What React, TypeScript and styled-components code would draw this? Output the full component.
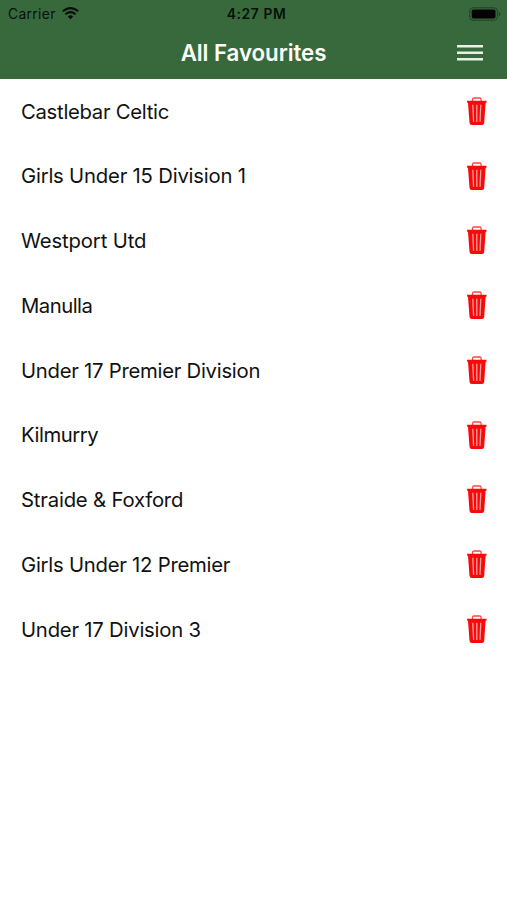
import React from "react";
import styled, { createGlobalStyle } from "styled-components";

const GlobalStyle = createGlobalStyle`
  * { box-sizing: border-box; }
  body { margin: 0; background: #fff; font-family: Inter, "Liberation Sans", sans-serif; }
`;

const Screen = styled.main`
  width: 100%;
  min-height: 900px;
  background: #fff;
`;

const Header = styled.header`
  height: 79px;
  background: #38693d;
`;

const StatusBar = styled.div`
  height: 27px;
  padding: 0 6px 0 8px;
  display: grid;
  grid-template-columns: 1fr auto 1fr;
  align-items: center;
  color: #061008;
`;

const Carrier = styled.div`
  display: flex;
  align-items: center;
  gap: 6px;
  font-size: 13.8px;
  letter-spacing: 0.35px;
`;

const Time = styled.time`
  padding-left: 4px;
  font-size: 13.8px;
  font-weight: 600;
  letter-spacing: 0.6px;
`;

const Battery = styled.svg`
  justify-self: end;
  display: block;
`;

const NavBar = styled.div`
  height: 51px;
  padding: 0 24px;
  display: grid;
  grid-template-columns: 1fr auto 1fr;
  align-items: center;
`;

const Title = styled.h1`
  grid-column: 2;
  margin: 0;
  color: #fbfff8;
  font-size: 22.3px;
  line-height: 28px;
  font-weight: 600;
  letter-spacing: -0.06px;
`;

const MenuButton = styled.button`
  justify-self: end;
  width: 26px;
  height: 18px;
  padding: 0;
  border: 0;
  background: none;
  svg { display: block; }
`;

const List = styled.ul`
  list-style: none;
  margin: 0;
  padding: 0;
`;

const Row = styled.li`
  height: 64.75px;
  padding: 0 20px 0 21px;
  display: flex;
  align-items: center;
  justify-content: space-between;
`;

const Name = styled.span<{ $tracking: number }>`
  padding-top: 0.5px;
  color: #111;
  font-size: 20.3px;
  line-height: 26px;
  letter-spacing: ${(p) => p.$tracking}px;
  white-space: nowrap;
`;

const DeleteButton = styled.button`
  width: 20px;
  height: 29px;
  padding: 0;
  border: 0;
  background: none;
  svg { display: block; }
`;

const MenuIcon = () => (
  <svg width="26" height="18" viewBox="0 0 26 18" stroke="#e9f1e6" strokeWidth="2.4">
    <path d="M0 2.2H26M0 8.7H26M0 15.2H26" />
  </svg>
);

const TrashIcon = () => (
  <svg width="20" height="29" viewBox="0 0 20 29" fill="none">
    <path d="M5.5 4.7V2.4Q5.5 1 6.9 1H12.7Q14.1 1 14.1 2.4V4.7" stroke="#ff4545" strokeWidth="1.3" />
    <path d="M.1 3.8H19.5V5.8H18.6L17.2 25.7Q17 27.9 14.9 27.9H4.8Q2.7 27.9 2.5 25.7L1 5.8H.1Z" fill="#fb0808" />
    <path d="M5.8 7.7L6.6 24.9M9.8 7.7V24.9M13.8 7.7L13 24.9" stroke="#ffa3a3" strokeWidth="1.25" />
  </svg>
);

const WifiIcon = () => (
  <svg width="17" height="13" viewBox="0 0 17 13" fill="none" stroke="currentColor" strokeWidth="2.1">
    <path d="M.8 4.3Q8.5-2.2 16.2 4.3M3.4 7.3Q8.5 2.9 13.6 7.3" />
    <path d="M5.8 9.4Q8.5 7.1 11.2 9.4L8.5 12.3Z" fill="currentColor" stroke="none" />
  </svg>
);

const favourites = [
  { name: "Castlebar Celtic", tracking: -0.29 },
  { name: "Girls Under 15 Division 1", tracking: -0.2 },
  { name: "Westport Utd", tracking: -0.14 },
  { name: "Manulla", tracking: -0.5 },
  { name: "Under 17 Premier Division", tracking: -0.26 },
  { name: "Kilmurry", tracking: -0.46 },
  { name: "Straide & Foxford", tracking: -0.19 },
  { name: "Girls Under 12 Premier", tracking: -0.24 },
  { name: "Under 17 Division 3", tracking: -0.22 },
];

export default function App() {
  return (
    <Screen>
      <GlobalStyle />
      <Header>
        <StatusBar>
          <Carrier>Carrier <WifiIcon /></Carrier>
          <Time>4:27 PM</Time>
          <Battery width="32" height="14" viewBox="0 0 32 14">
            <rect x=".8" y=".8" width="27.6" height="12.4" rx="3.2" fill="none" stroke="#1f4225" strokeWidth="1" />
            <rect x="2.7" y="2.6" width="23.8" height="8.8" rx="1.6" fill="#050204" />
            <path d="M29.8 4.8Q31.5 5.5 31.5 7T29.8 9.2Z" fill="#1f4225" />
          </Battery>
        </StatusBar>
        <NavBar>
          <Title>All Favourites</Title>
          <MenuButton aria-label="Menu"><MenuIcon /></MenuButton>
        </NavBar>
      </Header>
      <List>
        {favourites.map(({ name, tracking }) => (
          <Row key={name}>
            <Name $tracking={tracking}>{name}</Name>
            <DeleteButton aria-label={`Delete ${name}`}><TrashIcon /></DeleteButton>
          </Row>
        ))}
      </List>
    </Screen>
  );
}
